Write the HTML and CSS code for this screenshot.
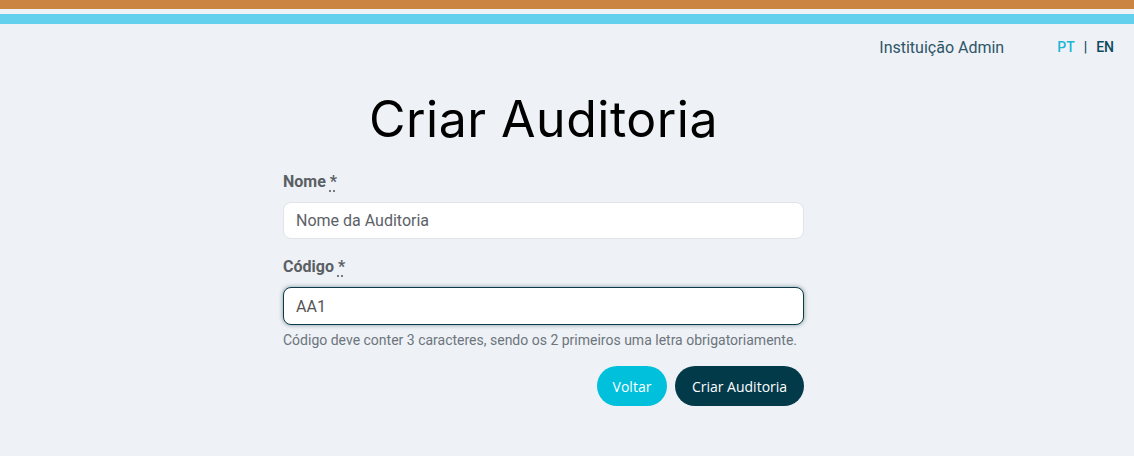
FILE: index.html
```html
<!DOCTYPE html>
<html lang="pt">
<head>
<meta charset="utf-8">
<title>Criar Auditoria</title>
<link rel="stylesheet" href="styles.css">
</head>
<body>
<div class="stripe stripe-orange"></div>
<div class="stripe-gap"></div>
<div class="stripe stripe-blue"></div>
<header class="topbar">
  <span class="user">Instituição Admin</span>
  <nav class="lang">
    <a class="lang-active">PT</a>
    <span class="sep">|</span>
    <a class="lang-item">EN</a>
  </nav>
</header>
<div class="wrap">
<main class="page">
  <h1 class="title">Criar Auditoria</h1>
  <form class="form">
    <div class="field">
      <label class="label">Nome <abbr class="req">*</abbr></label>
      <input class="input" type="text" placeholder="Nome da Auditoria">
    </div>
    <div class="field">
      <label class="label">Código <abbr class="req">*</abbr></label>
      <input class="input input-focus" type="text" value="AA1">
      <small class="help">Código deve conter 3 caracteres, sendo os 2 primeiros uma letra obrigatoriamente.</small>
    </div>
    <div class="actions">
      <button type="button" class="btn btn-back">Voltar</button>
      <button type="button" class="btn btn-primary">Criar Auditoria</button>
    </div>
  </form>
</main>
</div>
</body>
</html>
```

FILE: styles.css
```css
html, body {
  margin: 0;
  padding: 0;
  background: #eef1f5;
  font-family: Roboto, "Liberation Sans", sans-serif;
}
.stripe { height: 9px; }
.stripe-orange { background: #cc8443; }
.stripe-gap { height: 5px; }
.stripe-blue { background: #63d0ee; height: 10px; }

.topbar {
  display: flex;
  justify-content: flex-end;
  align-items: center;
  padding: 12px 20px 0 0;
  height: 22px;
}
.user {
  font-size: 16px;
  color: #2f5568;
  margin-right: 53px;
}
.lang {
  display: flex;
  gap: 9px;
  font-size: 14px;
  font-weight: 500;
}
.lang-active { color: #1bb6d6; }
.sep { color: #0e4a5e; }
.lang-item { color: #0e4a5e; }

.wrap {
  display: flex;
  justify-content: center;
  padding-right: 47px;
}
.page {
  width: 521px;
}
.title {
  font-family: Inter, "Open Sans", sans-serif;
  font-weight: 400;
  font-size: 50px;
  letter-spacing: 0.5px;
  text-align: center;
  margin: 25px 0 0 0;
  line-height: 72px;
  color: #000;
}
.form {
  display: flex;
  flex-direction: column;
  margin-top: 17px;
}
.field {
  display: flex;
  flex-direction: column;
  margin-bottom: 18px;
}
.label {
  font-size: 16px;
  font-weight: 700;
  color: #5a5f64;
  margin-bottom: 11px;
}
.req {
  text-decoration: underline dotted;
  text-underline-offset: 4px;
}
.input {
  box-sizing: border-box;
  height: 37px;
  border: 1px solid #e0e3e7;
  border-radius: 8px;
  background: #fff;
  padding: 0 12px;
  font-family: Roboto, "Liberation Sans", sans-serif;
  font-size: 16px;
  color: #555;
}
.input::placeholder { color: #5c6166; }
.input-focus {
  height: 38px;
  border: 1.5px solid #0d3a4a;
  box-shadow: 0 0 4px rgba(13, 58, 74, 0.5);
  outline: none;
}
.help {
  font-size: 14px;
  color: #6c757d;
  margin-top: 7px;
}
.actions {
  display: flex;
  justify-content: flex-end;
  gap: 8px;
  margin-top: 0;
}
.btn {
  height: 40px;
  border: none;
  border-radius: 20px;
  font-family: "Open Sans", Inter, sans-serif;
  font-size: 14px;
  color: #fff;
  padding: 0;
}
.btn-back { background: #00c0dc; width: 70px; }
.btn-primary { background: #023a4a; width: 129px; }
```
